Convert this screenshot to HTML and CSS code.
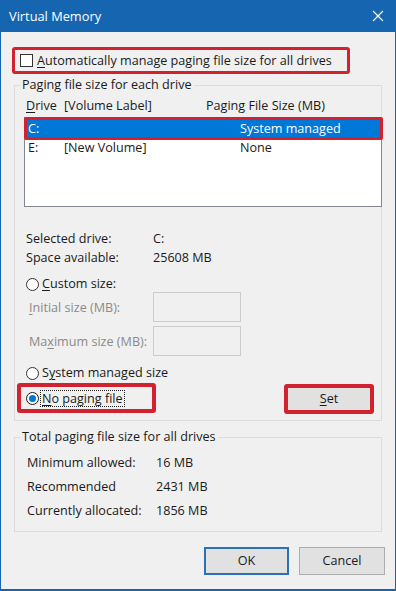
FILE: index.html
```html
<!DOCTYPE html>
<html>
<head>
<meta charset="utf-8">
<link rel="stylesheet" href="styles.css">
</head>
<body>
<div class="window">
  <div class="titlebar">
    <span class="title">Virtual Memory</span>
    <svg class="close" width="12" height="12" viewBox="0 0 12 12"><path d="M1 1 L11 11 M11 1 L1 11" stroke="#fff" stroke-width="1.2" fill="none"/></svg>
  </div>
  <div class="content">
    <div class="hl auto-box"><span class="checkbox"></span><span><u>A</u>utomatically manage paging file size for all drives</span></div>

    <fieldset class="group g1">
      <legend>Paging file size for each drive</legend>
      <div class="list-head"><span><u>D</u>rive</span><span>[Volume Label]</span><span>Paging File Size (MB)</span></div>
      <div class="listbox">
        <div class="row selected"><span>C:</span><span></span><span>System managed</span></div>
        <div class="row"><span>E:</span><span>[New Volume]</span><span>None</span></div>
      </div>
      <div class="info">
        <div class="kv"><span class="k">Selected drive:</span><span>C:</span></div>
        <div class="kv"><span class="k">Space available:</span><span>25608 MB</span></div>
      </div>
      <div class="radio-row custom"><span class="radio"></span><span><u>C</u>ustom size:</span></div>
      <div class="field"><span class="flabel"><u>I</u>nitial size (MB):</span><span class="input"></span></div>
      <div class="field second"><span class="flabel">Ma<u>x</u>imum size (MB):</span><span class="input"></span></div>
      <div class="radio-row sysman"><span class="radio"></span><span>S<u>y</u>stem managed size</span></div>
      <div class="action-row">
        <div class="hl nopage"><span class="radio checked"></span><span class="focus"><u>N</u>o paging file</span></div>
        <div class="hl setbox"><span><u>S</u>et</span></div>
      </div>
    </fieldset>

    <fieldset class="group g2">
      <legend>Total paging file size for all drives</legend>
      <div class="totals">
        <div class="kv"><span class="k">Minimum allowed:</span><span>16 MB</span></div>
        <div class="kv"><span class="k">Recommended</span><span>2431 MB</span></div>
        <div class="kv"><span class="k">Currently allocated:</span><span>1856 MB</span></div>
      </div>
    </fieldset>

    <div class="buttons">
      <div class="btn default">OK</div>
      <div class="btn">Cancel</div>
    </div>
  </div>
</div>
</body>
</html>
```
FILE: styles.css
```css
* { box-sizing: border-box; }
html, body { margin: 0; padding: 0; }
body {
  width: 396px;
  height: 591px;
  overflow: hidden;
  font-family: "Open Sans", "Noto Sans", sans-serif;
  font-size: 12.6px;
  line-height: 16px;
  color: #1a1a1a;
  background: #f0f0f0;
}
u { text-decoration: underline; text-underline-offset: 2px; text-decoration-thickness: 1px; }

.window {
  width: 396px;
  height: 591px;
  border: 1px solid #1565b0;
  border-top: none;
  border-bottom-width: 2px;
  background: #f0f0f0;
  display: flex;
  flex-direction: column;
}
.titlebar {
  height: 32px;
  margin: 0 -1px;
  background: #1565b0;
  color: #fff;
  display: flex;
  align-items: center;
  padding: 0 12px 0 9px;
  flex: none;
}
.title { flex: 1; font-size: 12.8px; }
.close { display: block; }

.content {
  padding-top: 15px;
  display: flex;
  flex-direction: column;
}

.hl {
  border: 3px solid #d3222f;
  border-radius: 3px;
}
.auto-box {
  margin-left: 11px;
  width: 338px;
  height: 27px;
  display: flex;
  align-items: center;
  padding-left: 5px;
  gap: 4px;
}
.checkbox {
  width: 13px;
  height: 13px;
  border: 1px solid #333;
  background: #fff;
  flex: none;
}

.group {
  margin: 0 0 0 13px;
  padding: 0;
  width: 368px;
  border: 1px solid #dcdcdc;
  min-inline-size: 0;
}
.group legend {
  margin-left: 5px;
  padding: 0 2px;
  line-height: 16px;
}
.g1 { margin-top: 3px; padding-bottom: 6px; }

.list-head {
  margin-top: 5px;
  padding-left: 11px;
  display: grid;
  grid-template-columns: 38px 142px auto;
}
.listbox {
  margin: 3px 0 0 9px;
  width: 358px;
  height: 90px;
  border: 1px solid #82878f;
  background: #fff;
}
.row {
  display: grid;
  grid-template-columns: 36px 176px auto;
  padding-left: 3px;
  height: 16px;
}
.row.selected {
  margin: -1px -2px 0 -1px;
  height: 23px;
  border: 3px solid #d3222f;
  border-radius: 2px;
  background: #0078d7;
  color: #fff;
  padding-left: 1px;
  align-items: center;
}

.info { margin-top: 22px; padding-left: 11px; }
.info .kv { line-height: 19px; display: flex; }
.info .k { width: 127px; }

.radio-row {
  display: flex;
  align-items: center;
  gap: 3px;
  padding-left: 11px;
}
.custom { margin-top: 9px; }
.sysman { margin-top: 9px; }
.radio {
  width: 13px;
  height: 13px;
  border-radius: 50%;
  border: 1px solid #333;
  background: #fff;
  flex: none;
  display: flex;
  align-items: center;
  justify-content: center;
}
.radio.checked { border-color: #1a1a1a; }
.radio.checked::after {
  content: "";
  width: 7px;
  height: 7px;
  border-radius: 50%;
  background: #0078d7;
}

.field {
  display: flex;
  align-items: center;
  padding-left: 14px;
}
.field.second { margin-top: 4px; }
.flabel { width: 124px; color: #8a8a8a; padding-top: 2px; }
.input {
  width: 88px;
  height: 30px;
  border: 1px solid #cccccc;
  background: #f0f0f0;
}

.action-row {
  margin-top: 2px;
  display: flex;
  align-items: flex-start;
}
.nopage {
  margin-left: 2px;
  width: 139px;
  height: 30px;
  border-width: 4px;
  display: flex;
  align-items: center;
  padding-left: 5px;
  gap: 2px;
}
.focus {
  outline: 1px dotted #222;
  padding: 0 1px;
  line-height: 15px;
}
.setbox {
  margin-left: auto;
  margin-right: 7px;
  margin-top: 1px;
  width: 90px;
  height: 30px;
  border-width: 4px;
  background: #e1e1e1;
  display: flex;
  align-items: center;
  justify-content: center;
}

.g2 { margin-top: 8px; padding-bottom: 8px; }
.totals { margin-top: 6px; padding-left: 12px; }
.totals .kv { display: flex; line-height: 24px; }
.totals .k { width: 129px; }

.buttons {
  margin-top: 15px;
  display: flex;
  justify-content: flex-end;
  gap: 10px;
  padding-right: 10px;
}
.btn {
  width: 86px;
  height: 28px;
  border: 1px solid #adadad;
  background: #e1e1e1;
  display: flex;
  align-items: center;
  justify-content: center;
}
.btn.default {
  width: 85px;
  border: 2px solid #2a72b8;
}
```
